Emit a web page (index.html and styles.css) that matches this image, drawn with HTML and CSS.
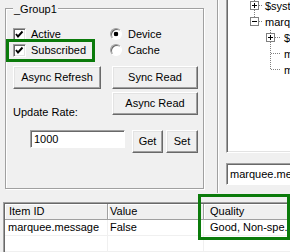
FILE: index.html
```html
<!DOCTYPE html>
<html lang="en">
<head>
    <meta charset="UTF-8">
    <title>OPC Group</title>
    <link rel="stylesheet" href="styles.css">
</head>
<body>
    <div class="top">
        <div class="left">
            <div class="group">
                <span class="group-title">_Group1</span>
                <div class="opts">
                    <div class="checks">
                        <div class="opt"><span class="check"><svg width="9" height="9" viewBox="0 0 9 9"><polyline points="1,4 3,6.5 7.5,1.5" fill="none" stroke="#000" stroke-width="1.9"/></svg></span>Active</div>
                        <div class="opt"><span class="check"><svg width="9" height="9" viewBox="0 0 9 9"><polyline points="1,4 3,6.5 7.5,1.5" fill="none" stroke="#000" stroke-width="1.9"/></svg></span>Subscribed</div>
                    </div>
                    <div class="radios">
                        <div class="opt"><span class="radio on"></span>Device</div>
                        <div class="opt"><span class="radio"></span>Cache</div>
                    </div>
                </div>
                <div class="btn-row">
                    <div class="btn-left">
                        <button class="btn refresh">Async Refresh</button>
                        <div class="rate-label">Update Rate:</div>
                    </div>
                    <div class="btn-col">
                        <button class="btn read">Sync Read</button>
                        <button class="btn read">Async Read</button>
                    </div>
                </div>
                <div class="rate-row">
                    <div class="edit rate">1000</div>
                    <button class="btn get">Get</button>
                    <button class="btn set">Set</button>
                </div>
            </div>
        </div>

        <div class="right">
            <div class="tree">
                <div class="nodes">
                    <div class="node">
                        <svg class="lines" width="34" height="16">
                            <path d="M26.5 0V3M26.5 12V16M31 7.5H34" stroke="#808080" stroke-dasharray="1 1"/>
                            <rect x="22.5" y="3.5" width="8" height="8" fill="#fff" stroke="#808080"/>
                            <path d="M24 7.5H29M26.5 5V10" stroke="#000"/>
                        </svg>
                        <span>$system</span>
                    </div>
                    <div class="node">
                        <svg class="lines" width="34" height="16">
                            <path d="M26.5 0V3M31 7.5H34" stroke="#808080" stroke-dasharray="1 1"/>
                            <rect x="22.5" y="3.5" width="8" height="8" fill="#fff" stroke="#808080"/>
                            <path d="M24 7.5H29" stroke="#000"/>
                        </svg>
                        <span>marquee</span>
                    </div>
                    <div class="node">
                        <svg class="lines child" width="53" height="16">
                            <path d="M42.5 0V3M42.5 12V16M47 7.5H53" stroke="#808080" stroke-dasharray="1 1"/>
                            <rect x="38.5" y="3.5" width="8" height="8" fill="#fff" stroke="#808080"/>
                            <path d="M40 7.5H45M42.5 5V10" stroke="#000"/>
                        </svg>
                        <span>$system</span>
                    </div>
                    <div class="node">
                        <svg class="lines child" width="53" height="16">
                            <path d="M42.5 0V16M43 7.5H53" stroke="#808080" stroke-dasharray="1 1"/>
                        </svg>
                        <span>message</span>
                    </div>
                    <div class="node">
                        <svg class="lines child" width="53" height="16">
                            <path d="M42.5 0V8M43 7.5H53" stroke="#808080" stroke-dasharray="1 1"/>
                        </svg>
                        <span>mode</span>
                    </div>
                </div>
            </div>
            <div class="edit path">marquee.message</div>
        </div>
    </div>

    <div class="list">
        <div class="lv-head">
            <div class="hc c1">Item ID</div>
            <div class="hc c2">Value</div>
            <div class="hc c3">Quality</div>
        </div>
        <div class="lv-row">
            <div class="cell c1">marquee.message</div>
            <div class="cell c2">False</div>
            <div class="cell c3">Good, Non-spe...</div>
        </div>
        <div class="lv-row">
            <div class="cell c1"></div>
            <div class="cell c2"></div>
            <div class="cell c3"></div>
        </div>
    </div>

    <div class="mark mark-sub"></div>
    <div class="mark mark-quality"></div>
</body>
</html>
```

FILE: styles.css
```css
* {
    box-sizing: border-box;
}

body {
    margin: 0;
    width: 290px;
    height: 252px;
    overflow: hidden;
    position: relative;
    background-color: #f0f0f0;
    color: #000;
    font: 11px/13px "Liberation Sans", Arial, sans-serif;
}

.top {
    display: flex;
    height: 193px;
}

.left {
    width: 204px;
    flex: none;
    padding: 8px 0 0 5px;
}

.group {
    position: relative;
    height: 181px;
    border: 1px solid #a0a0a0;
    box-shadow: inset 1px 1px #fff, 1px 1px #fff;
    padding: 17px 0 0 7px;
}

.group-title {
    position: absolute;
    top: -6px;
    left: 7px;
    padding: 0 1px;
    background-color: #f0f0f0;
}

.opts {
    display: flex;
}

.checks {
    width: 97px;
}

.opt {
    display: flex;
    align-items: center;
    height: 16px;
}

.check {
    width: 13px;
    height: 13px;
    margin-right: 5px;
    display: flex;
    align-items: center;
    justify-content: center;
    background-color: #fff;
    border: 1px solid;
    border-color: #a0a0a0 #fff #fff #a0a0a0;
    box-shadow: inset 1px 1px #696969, inset -1px -1px #e3e3e3;
}

.radio {
    width: 12px;
    height: 12px;
    margin-right: 6px;
    border-radius: 50%;
    border: 1px solid;
    border-color: #a0a0a0 #fff #fff #a0a0a0;
    box-shadow: inset 1px 1px #696969;
    background-color: #fff;
}

.radio.on {
    background: radial-gradient(circle, #000 0 2px, #fff 2.6px);
}

.btn {
    display: block;
    height: 23px;
    padding: 0;
    font: inherit;
    color: #000;
    background-color: #f0f0f0;
    border: 1px solid;
    border-color: #fff #696969 #696969 #fff;
    box-shadow: inset -1px -1px #a0a0a0, inset 1px 1px #e3e3e3;
}

.btn-row {
    display: flex;
    gap: 11px;
    margin-top: 8px;
}

.refresh {
    width: 88px;
}

.rate-label {
    margin-top: 17px;
}

.btn-col {
    display: flex;
    flex-direction: column;
    gap: 3px;
}

.read {
    width: 86px;
}

.rate-row {
    display: flex;
    margin: 11px 0 0 17px;
}

.edit {
    background-color: #fff;
    border: 1px solid;
    border-color: #a0a0a0 #fff #fff #a0a0a0;
    box-shadow: inset 1px 1px #696969;
    padding-left: 3px;
    white-space: nowrap;
    overflow: hidden;
}

.rate {
    width: 95px;
    height: 18px;
    line-height: 16px;
    margin-right: 7px;
}

.get {
    width: 31px;
    margin-right: 3px;
}

.set {
    width: 32px;
}

.right {
    flex: 1;
    margin-left: 13px;
    padding-left: 8px;
    overflow: hidden;
    border-left: 1px solid #a0a0a0;
    box-shadow: inset 1px 0 #fff;
}

.tree {
    width: 80px;
    height: 155px;
    margin-top: -2px;
    overflow: hidden;
    background-color: #fff;
    border: 1px solid;
    border-color: #a0a0a0 #fff #fff #a0a0a0;
    box-shadow: inset 1px 1px #696969, inset -1px -1px #e3e3e3;
    padding: 2px 0 0 1px;
}

.nodes {
    margin-top: -3px;
}

.node {
    display: flex;
    align-items: center;
    height: 16px;
    white-space: nowrap;
}

.lines {
    flex: none;
    margin-right: 3px;
}

.lines.child {
    margin-right: 3px;
}

.path {
    width: 80px;
    height: 22px;
    margin-top: 10px;
    line-height: 20px;
}

.list {
    width: 300px;
    height: 70px;
    margin: 9px 0 0 3px;
    padding: 1px 0 0 1px;
    background-color: #fff;
    border: 1px solid;
    border-color: #a0a0a0 #fff #fff #a0a0a0;
    box-shadow: inset 1px 1px #696969;
}

.lv-head {
    display: flex;
    height: 16px;
    background-color: #f0f0f0;
}

.hc {
    flex: none;
    height: 16px;
    line-height: 14px;
    border-right: 1px solid #a0a0a0;
    border-bottom: 1px solid #a0a0a0;
    box-shadow: inset 1px 1px #fff;
    white-space: nowrap;
}

.lv-row {
    display: flex;
    height: 16px;
}

.cell {
    flex: none;
    height: 16px;
    line-height: 15px;
    border-right: 1px solid #f0f0f0;
    border-bottom: 1px solid #f0f0f0;
    white-space: nowrap;
    overflow: hidden;
}

.c1 {
    width: 103px;
    padding-left: 4px;
}

.cell.c1 {
    padding-left: 3px;
}

.c2 {
    width: 96px;
    padding-left: 2px;
}

.c3 {
    width: 120px;
    padding-left: 6px;
}

.mark {
    position: absolute;
    border: 3px solid #0b7b0b;
}

.mark-sub {
    left: 6px;
    top: 39px;
    width: 89px;
    height: 23px;
}

.mark-quality {
    left: 198px;
    top: 194px;
    width: 92px;
    height: 46px;
}
```
